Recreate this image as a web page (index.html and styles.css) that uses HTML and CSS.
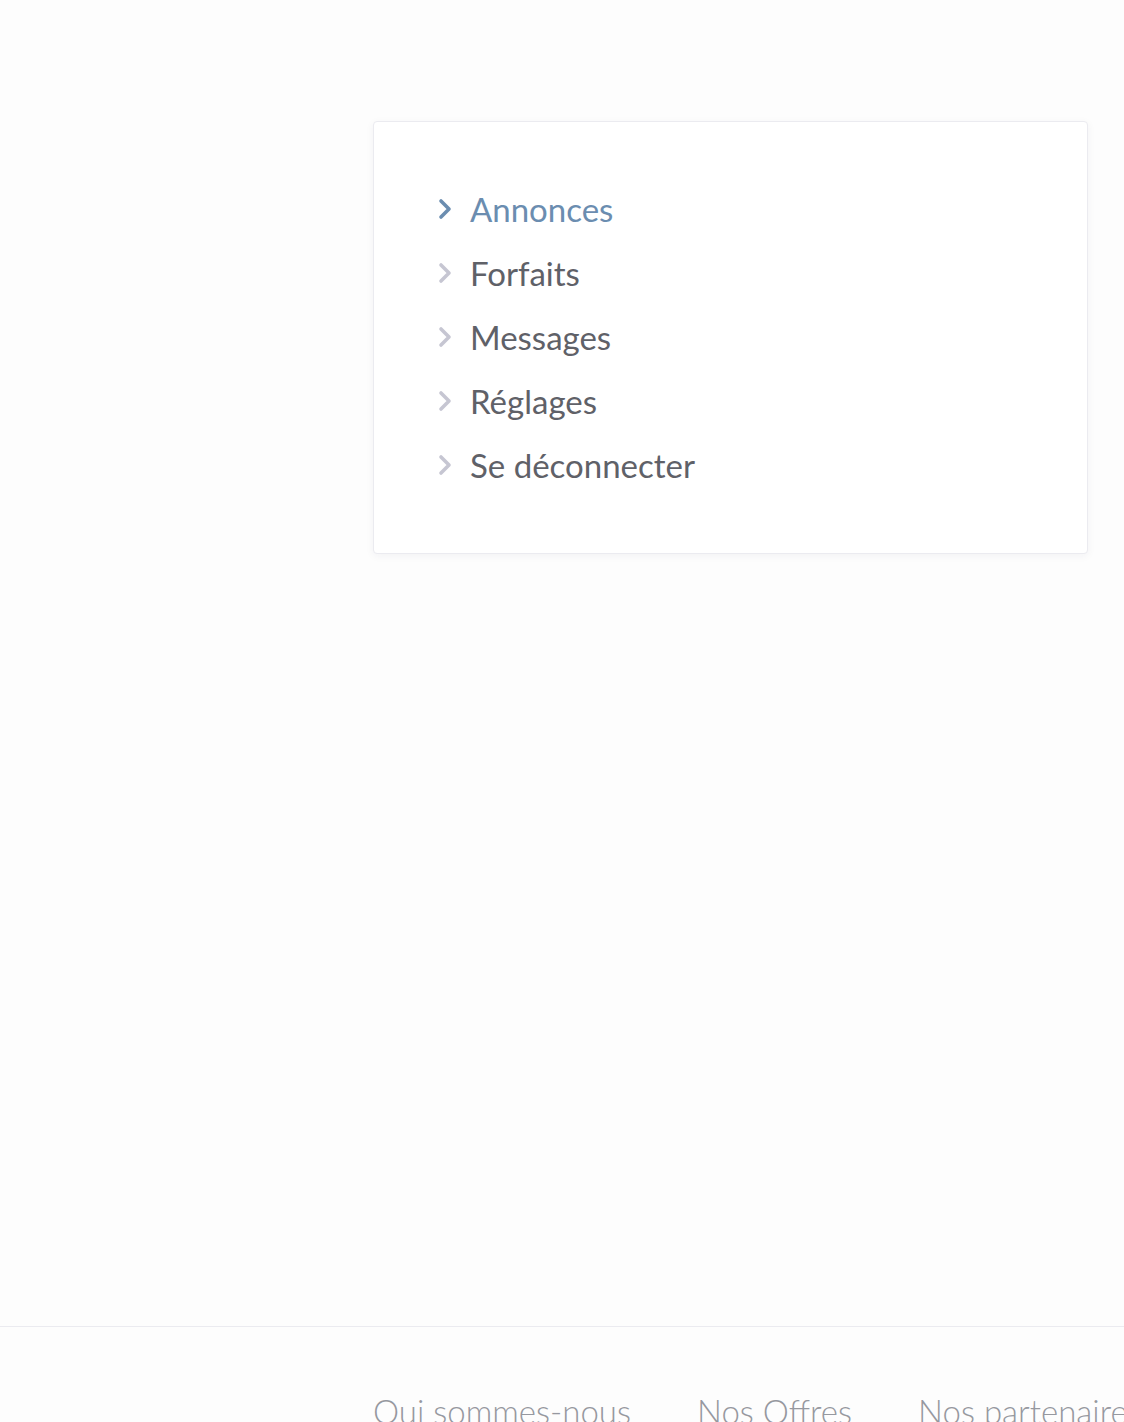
FILE: index.html
```html
<!DOCTYPE html>
<html lang="fr">
<head>
    <meta charset="UTF-8">
    <meta name="viewport" content="width=device-width, initial-scale=1.0">
    <title>Mon compte</title>
    <link rel="stylesheet" href="styles.css">
</head>
<body>
    <div class="page">
        <aside class="side"></aside>
        <main class="content">
            <nav class="card">
                <ul class="menu">
                    <li class="menu-item active">
                        <svg class="chev" viewBox="0 0 16 24" width="16" height="24"><path d="M3 4l8 8-8 8" fill="none" stroke="currentColor" stroke-width="3.6" stroke-linecap="round" stroke-linejoin="round"/></svg>
                        <span>Annonces</span>
                    </li>
                    <li class="menu-item">
                        <svg class="chev" viewBox="0 0 16 24" width="16" height="24"><path d="M3 4l8 8-8 8" fill="none" stroke="currentColor" stroke-width="3.6" stroke-linecap="round" stroke-linejoin="round"/></svg>
                        <span>Forfaits</span>
                    </li>
                    <li class="menu-item">
                        <svg class="chev" viewBox="0 0 16 24" width="16" height="24"><path d="M3 4l8 8-8 8" fill="none" stroke="currentColor" stroke-width="3.6" stroke-linecap="round" stroke-linejoin="round"/></svg>
                        <span>Messages</span>
                    </li>
                    <li class="menu-item">
                        <svg class="chev" viewBox="0 0 16 24" width="16" height="24"><path d="M3 4l8 8-8 8" fill="none" stroke="currentColor" stroke-width="3.6" stroke-linecap="round" stroke-linejoin="round"/></svg>
                        <span>Réglages</span>
                    </li>
                    <li class="menu-item">
                        <svg class="chev" viewBox="0 0 16 24" width="16" height="24"><path d="M3 4l8 8-8 8" fill="none" stroke="currentColor" stroke-width="3.6" stroke-linecap="round" stroke-linejoin="round"/></svg>
                        <span>Se déconnecter</span>
                    </li>
                </ul>
            </nav>
        </main>
    </div>

    <footer class="footer">
        <div class="footer-links">
            <a href="#">Qui sommes-nous</a>
            <a href="#">Nos Offres</a>
            <a href="#">Nos partenaires</a>
        </div>
    </footer>
</body>
</html>
```

FILE: styles.css
```css
body {
    margin: 0;
    padding: 0;
    background: #fdfdfd;
    font-family: Lato, 'Noto Sans', sans-serif;
    overflow: hidden;
}
.page {
    display: flex;
    height: 1326px;
    box-sizing: border-box;
    padding-top: 121px;
}
.side {
    width: 373px;
    flex-shrink: 0;
}
.content {
    width: 715px;
}
.card {
    background: #fff;
    border: 1px solid #ebebf0;
    border-radius: 4px;
    box-shadow: 0 2px 8px rgba(40, 40, 80, 0.05);
    height: 433px;
    box-sizing: border-box;
    padding: 55px 0 0 64px;
}
.menu {
    list-style: none;
    margin: 0;
    padding: 0;
}
.menu-item {
    display: flex;
    align-items: center;
    height: 64px;
    font-size: 33px;
    color: #5f6168;
}
.menu-item .chev {
    color: #c6c6d2;
    margin-right: 16px;
}
.menu-item.active {
    color: #6b8db0;
}
.menu-item.active .chev {
    color: #6b8db0;
}
.footer {
    border-top: 1px solid #ebebf0;
    padding: 64px 0 0 373px;
}
.footer-links {
    display: flex;
    gap: 66px;
    white-space: nowrap;
}
.footer-links a {
    font-size: 33px;
    font-weight: 300;
    color: #96989f;
    text-decoration: none;
}
```
